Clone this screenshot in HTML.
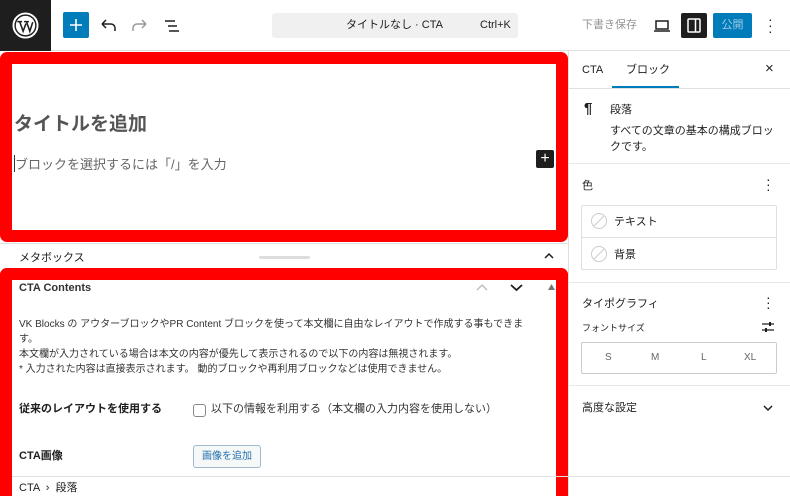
<!DOCTYPE html>
<html style="overflow:hidden;height:496px"><head><meta charset="utf-8"><style>
*{margin:0;padding:0;box-sizing:border-box}
body{width:790px;height:496px;overflow:hidden;background:#fff;font-family:"Liberation Sans","Noto Sans CJK JP",sans-serif;color:#1e1e1e;position:relative;line-height:1.2}
.a{position:absolute}
.t{font-size:11px;white-space:nowrap;padding-top:2px}
</style></head><body>
<!-- top bar -->
<div class="a" style="left:0;top:0;width:51px;height:51px;background:#1e1e1e"></div>
<svg class="a" style="left:12px;top:12px" width="27" height="27" viewBox="0 0 28 28"><circle cx="14" cy="14" r="12.5" fill="none" stroke="#fff" stroke-width="2"/><circle cx="14" cy="14" r="10" fill="#fff"/><path d="M5.5 10h5M8 10l3.5 10 3-8M12.5 10h5M15 10l3.5 10 3-9.5" stroke="#1e1e1e" stroke-width="1.6" fill="none"/></svg>
<div class="a" style="left:63px;top:12px;width:26px;height:26px;background:#007cba;border-radius:2px"></div>
<svg class="a" style="left:63px;top:12px" width="26" height="26"><path d="M13 7v12M7 13h12" stroke="#fff" stroke-width="1.6"/></svg>
<svg class="a" style="left:98px;top:16px" width="20" height="20"><path d="M4 8h9a4 4 0 0 1 4 4v3M4 8l4-4M4 8l4 4" stroke="#1e1e1e" stroke-width="1.5" fill="none"/></svg>
<svg class="a" style="left:130px;top:16px" width="20" height="20"><path d="M16 8H7a4 4 0 0 0-4 4v3M16 8l-4-4M16 8l-4 4" stroke="#999" stroke-width="1.5" fill="none"/></svg>
<svg class="a" style="left:162px;top:16px" width="20" height="20"><path d="M3 5h10M6 10h9M7 15h10" stroke="#1e1e1e" stroke-width="1.5"/></svg>
<div class="a" style="left:272px;top:13px;width:246px;height:25px;background:#f0f0f0;border-radius:3px"></div>
<div class="a t" style="left:346px;top:17px">タイトルなし · CTA</div>
<div class="a t" style="left:480px;top:17px">Ctrl+K</div>
<div class="a t" style="left:582px;top:17px;color:#949494">下書き保存</div>
<svg class="a" style="left:652px;top:16px" width="20" height="20"><path d="M4 5h12v8H4zM2 15h16" stroke="#1e1e1e" stroke-width="1.5" fill="none"/></svg>
<div class="a" style="left:681px;top:13px;width:26px;height:25px;background:#1e1e1e;border-radius:2px"></div>
<svg class="a" style="left:681px;top:13px" width="26" height="25"><rect x="7" y="6" width="12" height="13" rx="1" stroke="#fff" stroke-width="1.5" fill="none"/><path d="M14.5 6v13" stroke="#fff" stroke-width="1.5"/></svg>
<div class="a" style="left:713px;top:13px;width:39px;height:25px;background:#007cba;border-radius:2px;color:#9fcbe6;font-size:11px;text-align:center;line-height:25px">公開</div>
<div class="a" style="left:768px;top:16px;font-size:14px;line-height:6px;width:4px">·<br>·<br>·</div>
<div class="a" style="left:51px;top:50px;width:739px;height:1px;background:#e0e0e0"></div>
<!-- canvas -->
<div class="a" style="left:0;top:52px;width:568px;height:190px;border:12px solid #f00;border-radius:7px"></div>
<div class="a" style="left:14px;top:114px;font-size:19px;font-weight:bold;color:#555">タイトルを追加</div>
<div class="a" style="left:14px;top:155px;width:1px;height:17px;background:#333"></div>
<div class="a" style="left:15px;top:157px;font-size:13px;color:#666">ブロックを選択するには「/」を入力</div>
<div class="a" style="left:536px;top:150px;width:18px;height:18px;background:#1e1e1e;border-radius:2px;color:#fff;text-align:center;line-height:17px;font-size:16px">+</div>
<div class="a" style="left:0;top:243px;width:568px;height:1px;background:#e0e0e0"></div>
<div class="a t" style="left:19px;top:250px">メタボックス</div>
<div class="a" style="left:259px;top:256px;width:51px;height:3px;background:#ddd;border-radius:2px"></div>
<svg class="a" style="left:543px;top:251px" width="12" height="10"><path d="M2 7l4-4 4 4" stroke="#1e1e1e" stroke-width="1.5" fill="none"/></svg>
<div class="a" style="left:0;top:268px;width:568px;height:228px;border:12px solid #f00;border-bottom:none;border-radius:7px 7px 0 0"></div>
<div class="a t" style="left:19px;top:280px;font-weight:bold;color:#333">CTA Contents</div>
<svg class="a" style="left:476px;top:283px" width="12" height="9"><path d="M1 7l5-5 5 5" stroke="#bbb" stroke-width="1.3" fill="none"/></svg>
<svg class="a" style="left:510px;top:283px" width="13" height="9"><path d="M1 2l5.5 5 5.5-5" stroke="#1e1e1e" stroke-width="1.8" fill="none"/></svg>
<svg class="a" style="left:548px;top:284px" width="7" height="6"><path d="M0 6L3.5 0 7 6z" fill="#777"/></svg>
<div class="a" style="left:19px;top:317px;font-size:10px;line-height:15px;color:#333;width:520px">VK Blocks の アウターブロックやPR Content ブロックを使って本文欄に自由なレイアウトで作成する事もできます。<br>本文欄が入力されている場合は本文の内容が優先して表示されるので以下の内容は無視されます。<br>* 入力された内容は直接表示されます。 動的ブロックや再利用ブロックなどは使用できません。</div>
<div class="a t" style="left:19px;top:401px;font-weight:bold">従来のレイアウトを使用する</div>
<div class="a" style="left:193px;top:404px;width:13px;height:13px;border:1px solid #888;border-radius:3px"></div>
<div class="a t" style="left:211px;top:401px;color:#333">以下の情報を利用する（本文欄の入力内容を使用しない）</div>
<div class="a t" style="left:19px;top:448px;font-weight:bold">CTA画像</div>
<div class="a" style="left:193px;top:445px;width:68px;height:23px;border:1px solid #a0b8cc;border-radius:3px;background:#f6f7f7;color:#2271b1;font-size:10px;text-align:center;line-height:21px">画像を追加</div>
<div class="a" style="left:12px;top:476px;width:778px;height:1px;background:#e0e0e0"></div>
<div class="a t" style="left:19px;top:480px">CTA &nbsp;›&nbsp; 段落</div>
<!-- sidebar -->
<div class="a" style="left:568px;top:51px;width:1px;height:445px;background:#e0e0e0"></div>
<div class="a t" style="left:582px;top:62px">CTA</div>
<div class="a t" style="left:626px;top:62px">ブロック</div>
<div class="a" style="left:612px;top:86px;width:67px;height:2px;background:#007cba"></div>
<div class="a" style="left:569px;top:88px;width:221px;height:1px;background:#e0e0e0"></div>
<div class="a" style="left:765px;top:60px;font-size:15px">×</div>
<div class="a" style="left:584px;top:100px;font-size:15px;font-weight:bold">¶</div>
<div class="a t" style="left:610px;top:102px">段落</div>
<div class="a" style="left:610px;top:123px;font-size:11px;line-height:16px;width:170px">すべての文章の基本の構成ブロックです。</div>
<div class="a" style="left:569px;top:163px;width:221px;height:1px;background:#e8e8e8"></div>
<div class="a t" style="left:582px;top:178px">色</div>
<div class="a" style="left:766px;top:177px;font-size:14px;line-height:5px">·<br>·<br>·</div>
<div class="a" style="left:581px;top:205px;width:196px;height:65px;border:1px solid #e0e0e0;border-radius:2px"></div>
<div class="a" style="left:582px;top:237px;width:194px;height:1px;background:#e0e0e0"></div>
<svg class="a" style="left:590px;top:212px" width="18" height="18"><circle cx="9" cy="9" r="7.5" fill="none" stroke="#ccc"/><path d="M4 14L14 4" stroke="#ccc"/></svg>
<svg class="a" style="left:590px;top:245px" width="18" height="18"><circle cx="9" cy="9" r="7.5" fill="none" stroke="#ccc"/><path d="M4 14L14 4" stroke="#ccc"/></svg>
<div class="a t" style="left:614px;top:214px">テキスト</div>
<div class="a t" style="left:614px;top:247px">背景</div>
<div class="a" style="left:569px;top:282px;width:221px;height:1px;background:#e8e8e8"></div>
<div class="a t" style="left:582px;top:296px">タイポグラフィ</div>
<div class="a" style="left:766px;top:295px;font-size:14px;line-height:5px">·<br>·<br>·</div>
<div class="a" style="left:582px;top:323px;font-size:9px">フォントサイズ</div>
<svg class="a" style="left:761px;top:320px" width="14" height="14"><path d="M1 4h12M1 10h12" stroke="#1e1e1e" stroke-width="1.3"/><rect x="8" y="2" width="2" height="4" fill="#1e1e1e"/><rect x="4" y="8" width="2" height="4" fill="#1e1e1e"/></svg>
<div class="a" style="left:581px;top:342px;width:196px;height:32px;border:1px solid #ccc;border-radius:2px"></div>
<div class="a" style="left:605px;top:352px;font-size:10px;color:#666">S</div>
<div class="a" style="left:651px;top:352px;font-size:10px;color:#666">M</div>
<div class="a" style="left:701px;top:352px;font-size:10px;color:#666">L</div>
<div class="a" style="left:744px;top:352px;font-size:10px;color:#666">XL</div>
<div class="a" style="left:569px;top:385px;width:221px;height:1px;background:#e8e8e8"></div>
<div class="a t" style="left:582px;top:400px">高度な設定</div>
<svg class="a" style="left:762px;top:404px" width="12" height="8"><path d="M2 2l4 4 4-4" stroke="#1e1e1e" stroke-width="1.5" fill="none"/></svg>
</body></html>
